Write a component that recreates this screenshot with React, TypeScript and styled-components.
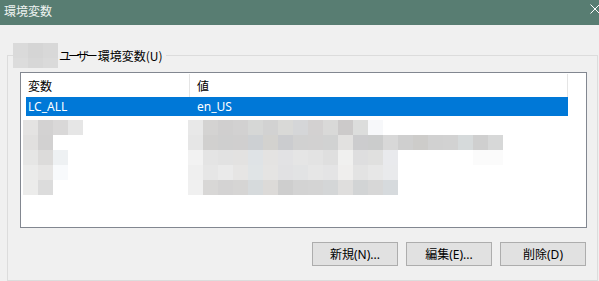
import React from 'react';
import styled, { createGlobalStyle } from 'styled-components';

const GlobalStyle = createGlobalStyle`
  html, body {
    margin: 0;
    padding: 0;
    background: #f0f0f0;
    overflow: hidden;
  }
  body {
    font-family: "Noto Sans", "Noto Sans CJK JP", sans-serif;
    font-size: 12px;
    color: #000;
  }
`;

const Window = styled.div`
  width: 599px;
  height: 281px;
  display: flex;
  flex-direction: column;
  overflow: hidden;
`;

const TitleBar = styled.div`
  height: 25px;
  flex: none;
  background: #587d72;
  color: #eef3f1;
  display: flex;
  align-items: flex-start;
  justify-content: space-between;
  padding: 0 0 0 4px;
  box-sizing: border-box;
  overflow: hidden;
  svg {
    margin: 4px -1px 0 0;
  }
`;

const Title = styled.span`
  font-family: "Noto Sans CJK JP", sans-serif;
  font-size: 12px;
  line-height: 22px;
`;

const Content = styled.div`
  flex: 1;
  display: flex;
  flex-direction: column;
  padding: 18px 1px 0 7px;
`;

const Group = styled.div`
  flex: 1;
  display: flex;
  flex-direction: column;
`;

const GroupHead = styled.div`
  height: 25px;
  display: flex;
  flex: none;
`;

const Corner = styled.div<{ $side: 'left' | 'right' }>`
  margin-top: 12px;
  border-top: 1px solid #dcdcdc;
  ${(p) => (p.$side === 'left' ? 'width: 5px; border-left: 1px solid #dcdcdc;' : 'flex: 1; border-right: 1px solid #dcdcdc;')}
`;

const GroupLabel = styled.span`
  font-family: "Noto Sans CJK JP", sans-serif;
  line-height: 25px;
  padding: 0 3px 0 1px;
  white-space: nowrap;
`;

const Kana = styled.span`
  letter-spacing: -3px;
  margin-right: 3px;
`;

const GroupBody = styled.div`
  flex: 1;
  display: flex;
  flex-direction: column;
  border: 1px solid #dcdcdc;
  border-top: none;
  padding: 4px 10px 0 12px;
`;

const ListBox = styled.div`
  height: 156px;
  box-sizing: border-box;
  border: 1px solid #828790;
  background: #fff;
  padding-left: 5px;
  overflow: hidden;
`;

const Row = styled.div<{ $selected?: boolean; $header?: boolean }>`
  display: flex;
  width: 542px;
  height: ${(p) => (p.$header ? 24 : 19)}px;
  background: ${(p) => (p.$selected ? '#0078d7' : 'transparent')};
  color: ${(p) => (p.$selected ? '#fff' : '#000')};
`;

const Cell = styled.div<{ $width: number; $pad: number; $divider?: boolean }>`
  width: ${(p) => p.$width}px;
  box-sizing: border-box;
  padding-left: ${(p) => p.$pad}px;
  display: flex;
  align-items: center;
  white-space: nowrap;
  ${(p) => (p.$divider ? 'border-right: 1px solid #e5e5e5; margin-top: 1px;' : '')}
`;

const Mosaics = styled.div`
  display: flex;
  gap: 105px;
  margin: 4px 0 0 -3px;
  svg {
    display: block;
  }
`;

const ButtonRow = styled.div`
  display: flex;
  justify-content: flex-end;
  gap: 8px;
  margin-top: 14px;
  padding-right: 1px;
`;

const Button = styled.button`
  width: 86px;
  height: 24px;
  box-sizing: border-box;
  border: 1px solid #adadad;
  background: #e1e1e1;
  font-family: "Noto Sans", "Noto Sans CJK JP", sans-serif;
  font-size: 12px;
  color: #000;
  padding: 0;
  display: flex;
  align-items: center;
  justify-content: center;
`;

type Grid = (string | null)[][];

const labelBlur: Grid = [
  ['#dadada', '#d5d5d5', '#d8d8d8'],
  ['#dcdcdc', '#d7d7d7', '#dadada'],
];

const leftBlur: Grid = [
  ['#e4e3e2', '#d3d2d2', '#d9d8d8', '#e6e6e6'],
  ['#e1e0df', '#d2d1d1', null, null],
  ['#e6e6e5', '#dcdbda', '#eef1f3', null],
  ['#ebebea', '#e6e5e4', '#f8fafc', null],
  ['#ececeb', '#dcdcdc', null, null],
];

const rightBlur: Grid = [
  ['#e8e8e8', '#d4d3d2', '#d0cfcf', '#d2d1d1', '#d6d7d6', '#d2d2d2', '#d9d9d7', '#d5d6d8', '#d3d1d1', '#d9d9d8', '#cccaca', '#dcdddc', '#f7f8fa'],
  ['#e6e6e6', '#d1d0cf', '#cfcfcf', '#d0cfcf', '#cdd0d3', '#d3d2cf', '#cbcccf', '#d1d1d1', '#d2d1d1', '#d1d2d2', '#e2e1e0', '#ccccce', '#cbcccc', '#d8d8d8', '#cfcfcf', '#cdccca', '#d1d1d1', '#d2d2d2', '#d6dadb', '#cfcfcf', '#d7d8d8'],
  ['#f2f2f2', '#e4e4e4', '#e2e2e2', '#e3e2e1', '#dfe3e6', '#e4e3e2', '#e2e2e4', '#e5e5e5', '#e3e3e3', '#dfdfdf', '#f0f0ef', '#dededf', '#e0e0df', '#e9eaed', null, null, null, null, null, '#fbfbfb', '#fbfbfb'],
  ['#efefef', '#e6e6e6', '#eaeaea', '#e6e5e4', '#e0e4e6', '#e5e4e3', '#e1e1e3', '#e2e3e4', '#e6e6e6', '#e4e4e5', '#efeeed', '#e3e3e3', '#e7e7e7', '#e9eaec'],
  ['#f0f0f0', '#d8d7d6', '#d4d3d3', '#d6d5d4', '#d6dadc', '#dcdad8', '#cecece', '#d3d3d3', '#d4d4d4', '#d4d6d7', '#dfdedd', '#d2d4d5', '#d7d7d7', '#d6dadd'],
];

const Blur: React.FC<{ grid: Grid; cols: number; cell?: number; heights?: number[] }> = ({
  grid,
  cols,
  cell = 15,
  heights,
}) => {
  const rowH = heights ?? grid.map(() => cell);
  const total = rowH.reduce((a, b) => a + b, 0);
  let y = 0;
  return (
    <svg width={cols * cell} height={total} shapeRendering="crispEdges">
      {grid.map((row, r) => {
        const top = y;
        y += rowH[r];
        return row.map((c, i) =>
          c ? <rect key={`${r}-${i}`} x={i * cell} y={top} width={cell} height={rowH[r]} fill={c} /> : null,
        );
      })}
    </svg>
  );
};

const CloseIcon = () => (
  <svg width="10" height="10" viewBox="0 0 10 10">
    <path d="M0.5 0.5 L9.5 9.5 M9.5 0.5 L0.5 9.5" stroke="#ffffff" strokeWidth="1" fill="none" />
  </svg>
);

export default function App() {
  return (
    <>
      <GlobalStyle />
      <Window>
        <TitleBar>
          <Title>環境変数</Title>
          <CloseIcon />
        </TitleBar>
        <Content>
          <Group>
            <GroupHead>
              <Corner $side="left" />
              <Blur grid={labelBlur} cols={3} heights={[15, 10]} />
              <GroupLabel>
                <Kana>ユーザー</Kana>環境変数(U)
              </GroupLabel>
              <Corner $side="right" />
            </GroupHead>
            <GroupBody>
              <ListBox>
                <Row $header>
                  <Cell $width={164} $pad={2} $divider>変数</Cell>
                  <Cell $width={378} $pad={7} $divider>値</Cell>
                </Row>
                <Row $selected>
                  <Cell $width={164} $pad={2}>LC_ALL</Cell>
                  <Cell $width={378} $pad={7}>en_US</Cell>
                </Row>
                <Mosaics>
                  <Blur grid={leftBlur} cols={4} />
                  <Blur grid={rightBlur} cols={21} />
                </Mosaics>
              </ListBox>
              <ButtonRow>
                <Button>新規(N)...</Button>
                <Button>編集(E)...</Button>
                <Button>削除(D)</Button>
              </ButtonRow>
            </GroupBody>
          </Group>
        </Content>
      </Window>
    </>
  );
}
